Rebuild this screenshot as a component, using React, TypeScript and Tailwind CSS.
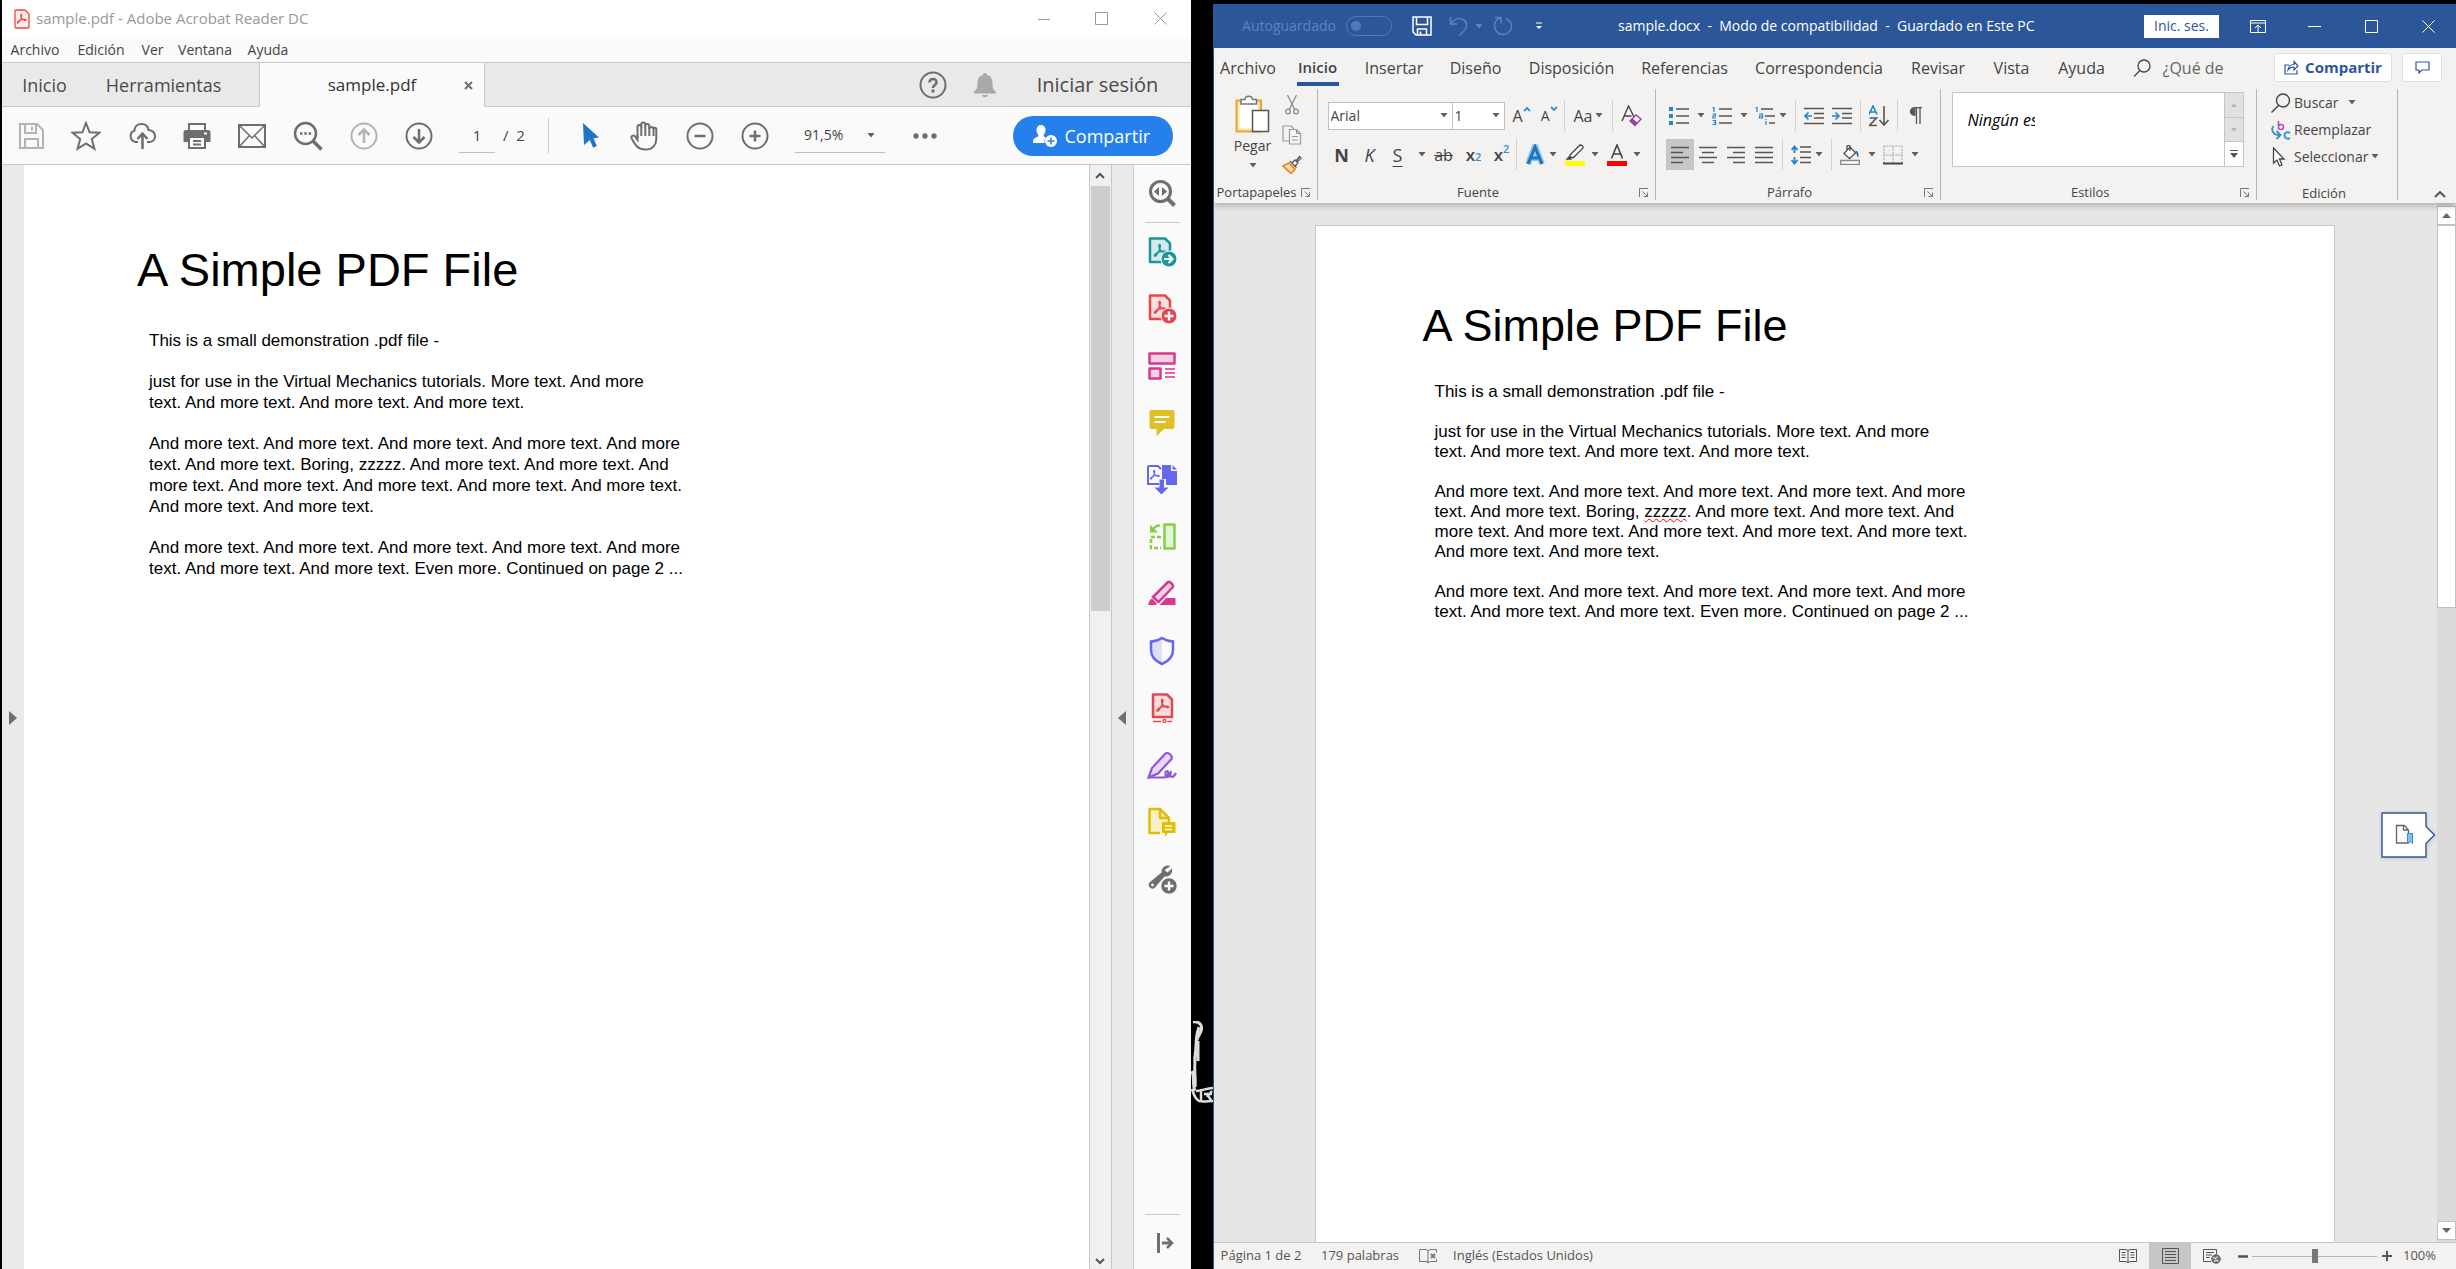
import React from "react";

type SvgProps = { w: number; h: number; sw?: number; className?: string; children: React.ReactNode };

function Svg({ w, h, sw = 1, className = "", children }: SvgProps) {
  return (
    <svg
      aria-hidden="true"
      width={w}
      height={h}
      viewBox={`0 0 ${w} ${h}`}
      fill="none"
      stroke="currentColor"
      strokeWidth={sw}
      className={`block shrink-0 ${className}`}
    >
      {children}
    </svg>
  );
}

function Btn({ label, className, children }: { label: string; className: string; children: React.ReactNode }) {
  return (
    <button type="button" aria-label={label} className={`flex shrink-0 items-center justify-center whitespace-nowrap ${className}`}>
      {children}
    </button>
  );
}

/* ---------- shared document body ---------- */

function Paragraphs({ className, marked }: { className: string; marked?: boolean }) {
  return (
    <div className={`flex flex-col gap-5 whitespace-nowrap ${className}`}>
      <p>This is a small demonstration .pdf file -</p>
      <p>
        just for use in the Virtual Mechanics tutorials. More text. And more
        <br />
        text. And more text. And more text. And more text.
      </p>
      <p>
        And more text. And more text. And more text. And more text. And more
        <br />
        text. And more text. Boring,{" "}
        <span className={marked ? "underline decoration-[#f00] decoration-wavy decoration-1 underline-offset-1 [text-decoration-skip-ink:none]" : ""}>zzzzz</span>
        . And more text. And more text. And
        <br />
        more text. And more text. And more text. And more text. And more text.
        <br />
        And more text. And more text.
      </p>
      <p>
        And more text. And more text. And more text. And more text. And more
        <br />
        text. And more text. And more text. Even more. Continued on page 2 ...
      </p>
    </div>
  );
}

/* ---------- Acrobat ---------- */

function AcrobatMark({ x, y, s = 1, color }: { x: number; y: number; s?: number; color: string }) {
  return (
    <g transform={`translate(${x} ${y}) scale(${s})`} stroke={color} strokeWidth="1.5">
      <path d="M5.5 0.5c1.4 0 .8 3.200-.2 5.500C4.300 8.300 2.200 12 1 12.200c-1.600 0 .6-3.200 4-4.100 3-1 7-1.400 7.200-.1.100 1.500-4.400-.2-5.800-2C5 4.200 4.600.6 5.500.5z" />
    </g>
  );
}

function AcrobatTitle() {
  return (
    <header className="flex h-[37px] shrink-0 items-center bg-white pl-3 text-[#999]">
      <Svg w={16} h={20} sw={1.3} className="text-[#f0463c]">
        <path d="M2 1h9l4 4v13a1 1 0 0 1-1 1H2a1 1 0 0 1-1-1V2a1 1 0 0 1 1-1z" fill="#fdeeee" />
        <AcrobatMark x={3} y={5} s={0.75} color="#f0463c" />
      </Svg>
      <h1 className="ml-1.5 flex-1 text-[15px] whitespace-nowrap">sample.pdf - Adobe Acrobat Reader DC</h1>
      <Btn label="Minimizar" className="h-full w-[58px]">
        <Svg w={12} h={12}><path d="M0 6.500h12" /></Svg>
      </Btn>
      <Btn label="Maximizar" className="h-full w-[58px]">
        <Svg w={13} h={13}><path d="M.5.5h12v12H.5z" /></Svg>
      </Btn>
      <Btn label="Cerrar" className="h-full w-[60px]">
        <Svg w={13} h={13}><path d="M.5.5l12 12M12.500.5l-12 12" /></Svg>
      </Btn>
    </header>
  );
}

function AcrobatMenu() {
  return (
    <nav className="flex h-[26px] shrink-0 items-center gap-4 border-b border-[#c8c8c8] bg-[#fafafa] pl-2 text-sm text-[#444]">
      <Btn label="Archivo" className="w-[50px]">Archivo</Btn>
      <Btn label="Edición" className="w-[50px]">Edición</Btn>
      <Btn label="Ver" className="w-[21px]">Ver</Btn>
      <Btn label="Ventana" className="w-[52px]">Ventana</Btn>
      <Btn label="Ayuda" className="w-[42px]">Ayuda</Btn>
    </nav>
  );
}

function AcrobatTabs() {
  return (
    <div className="flex h-11 shrink-0 items-stretch bg-[#e9e9e9] text-[#4b4b4b]">
      <div className="flex w-[257px] shrink-0 items-center border-b border-[#c8c8c8] pl-[19px] text-lg">
        <Btn label="Inicio" className="w-[47px]">Inicio</Btn>
        <Btn label="Herramientas" className="ml-[38px] w-[115px]">Herramientas</Btn>
      </div>
      <div className="flex w-[226px] shrink-0 items-center border-x border-[#c8c8c8] bg-[#fafafa] pl-[70px] text-[17px] text-[#333]">
        <Btn label="sample.pdf" className="w-[84px]">sample.pdf</Btn>
        <Btn label="Cerrar pestaña" className="ml-11 w-5 text-[#6e6e6e]">
          <Svg w={9} h={9} sw={2}><path d="M1 1l7 7M8 1l-7 7" /></Svg>
        </Btn>
      </div>
      <div className="flex flex-1 items-center justify-end border-b border-[#c8c8c8] pr-[30px]">
        <Btn label="Ayuda" className="text-[#6e6e6e]">
          <Svg w={28} h={28} sw={2}>
            <circle cx="14" cy="14" r="12.500" />
            <path d="M10.500 11.500c0-5 7.500-4.500 7 0-.3 2.500-3.500 2.500-3.500 5.500" strokeWidth="2.500" />
            <circle cx="14" cy="20" r="1.700" fill="currentColor" stroke="none" />
          </Svg>
        </Btn>
        <Btn label="Notificaciones" className="ml-[26px] text-[#a9a9a9]">
          <Svg w={24} h={26}>
            <path d="M12 1c1.500 0 2 .8 2 2 4 1 5.500 4 5.500 8 0 5 .8 6.500 3.500 9v1.500H1V20c2.700-2.500 3.500-4 3.500-9 0-4 1.500-7 5.500-8 0-1.200.5-2 2-2zM9 23h6c-.5 3-5.500 3-6 0z" fill="currentColor" stroke="none" />
          </Svg>
        </Btn>
        <Btn label="Iniciar sesión" className="ml-[38px] w-[126px] text-xl">Iniciar sesión</Btn>
      </div>
    </div>
  );
}

function CaretDown({ className = "" }: { className?: string }) {
  return (
    <Svg w={8} h={5} className={`text-[#605e5c] ${className}`}>
      <path d="M0.500 0h7L4 4.500z" fill="currentColor" stroke="none" />
    </Svg>
  );
}

function AcrobatToolbar() {
  return (
    <div className="flex h-[58px] shrink-0 items-center border-b border-[#c8c8c8] bg-[#fafafa] pl-4 text-[#6e6e6e]">
      <div className="flex items-center gap-[27px]">
        <Btn label="Guardar" className="w-[26px] text-[#b3b3b3]">
          <Svg w={28} h={28} sw={2}>
            <path d="M3 2h17l6 6v18H3zM8 2v9h11V2M15 4.500v4M8 26v-9h13v9" />
          </Svg>
        </Btn>
        <Btn label="Favoritos" className="w-[30px]">
          <Svg w={30} h={30} sw={2}>
            <path d="M15 2l3.600 9.300 9.900.5-7.700 6.300 2.600 9.700L15 22.400l-8.400 5.400 2.600-9.700-7.700-6.300 9.900-.5z" />
          </Svg>
        </Btn>
        <Btn label="Cargar en la nube" className="w-7">
          <Svg w={28} h={28} sw={2}>
            <path d="M10 20H7.500a6 6 0 0 1-1-11.500C6.500 5 9 2 13.500 2c4 0 6.500 2.500 7 6 4 .5 6.500 3 6.500 6.500 0 3-2.500 5.500-5.500 5.500H19" />
            <path d="M14.500 27V12M9.500 17l5-5.500 5 5.500" strokeWidth="2.500" />
          </Svg>
        </Btn>
        <Btn label="Imprimir" className="w-7">
          <Svg w={28} h={28} sw={2}>
            <path d="M6 8V2h16v6" />
            <path d="M3 8h22a2.500 2.500 0 0 1 2.500 2.500V20H23v-4H5v4H.5v-9.500A2.500 2.500 0 0 1 3 8z" fill="currentColor" stroke="none" />
            <path d="M6 15h16v11H6zM10 19h8M10 22.500h8" fill="#fafafa" />
            <path d="M21 11.500h3" stroke="#fafafa" />
          </Svg>
        </Btn>
        <Btn label="Correo" className="w-7">
          <Svg w={28} h={24} sw={2}>
            <path d="M1 1h26v22H1z" />
            <path d="M2 2l12 12L26 2M2 22l9-10M26 22l-9-10" strokeWidth="1.500" />
          </Svg>
        </Btn>
        <Btn label="Buscar" className="w-[30px]">
          <Svg w={30} h={30} sw={2.500}>
            <circle cx="12.500" cy="12.500" r="10.500" />
            <path d="M20 20l8.500 8.500" strokeWidth="3.500" />
            <path d="M7 12.500h2.500M11.300 12.500h2.500M15.600 12.500h2.500" />
          </Svg>
        </Btn>
        <Btn label="Página anterior" className="w-7 text-[#b3b3b3]">
          <Svg w={28} h={28} sw={2}>
            <circle cx="14" cy="14" r="12.500" />
            <path d="M14 21V8M8.500 13L14 7.500l5.500 5.500" strokeWidth="2.500" />
          </Svg>
        </Btn>
        <Btn label="Página siguiente" className="w-7">
          <Svg w={28} h={28} sw={2}>
            <circle cx="14" cy="14" r="12.500" />
            <path d="M14 7v13M8.500 15l5.500 5.500 5.500-5.500" strokeWidth="2.500" />
          </Svg>
        </Btn>
      </div>
      <input
        aria-label="Página"
        defaultValue="1"
        className="ml-[26px] h-[35px] w-9 border-b border-[#c0c0c0] bg-transparent text-center text-[15px] text-[#444] outline-none"
      />
      <span className="ml-2 w-7 text-[15px] text-[#444]">/&nbsp; 2</span>
      <div className="ml-[17px] h-[35px] w-px bg-[#c8c8c8]" />
      <Btn label="Seleccionar" className="ml-[34px] w-4 text-[#1d74c9]">
        <Svg w={16} h={26}>
          <path d="M0 0l16 14.500-5.500.8 3.300 7.700-3.600 1.800-3.400-7.800L1 22z" fill="currentColor" stroke="none" />
        </Svg>
      </Btn>
      <Btn label="Mano" className="ml-[31px] w-7">
        <Svg w={28} h={30} sw={2}>
          <path d="M7.500 17V6c0-2.600 3.800-2.600 3.800 0V3.500c0-2.800 4-2.800 4 0V5c0-2.700 4-2.700 4 0v3c0-2.600 4.200-2.600 4.200 0" />
          <path d="M7.500 13.500v5.500L5 15.500c-1.500-2-4.500-.3-3.300 2C5 24 8 28.500 15.500 28.500c7.500 0 10.800-5 10.800-10.500V8.500c0-2.200-2.800-2.200-2.800 0V15M11.300 5.500V15M15.300 4.500V15M19.300 6v9" />
        </Svg>
      </Btn>
      <Btn label="Reducir" className="ml-7 w-7">
        <Svg w={28} h={28} sw={2}><circle cx="14" cy="14" r="12.500" /><path d="M8.500 14h11" strokeWidth="2.500" /></Svg>
      </Btn>
      <Btn label="Ampliar" className="ml-[27px] w-7">
        <Svg w={28} h={28} sw={2}><circle cx="14" cy="14" r="12.500" /><path d="M8.500 14h11M14 8.500v11" strokeWidth="2.500" /></Svg>
      </Btn>
      <div className="ml-[26px] flex h-[35px] w-[90px] shrink-0 items-center border-b border-[#c0c0c0]">
        <select aria-label="Zoom" className="w-[72px] appearance-none bg-transparent pl-[9px] text-sm text-[#444] outline-none">
          <option>91,5%</option>
        </select>
        <CaretDown />
      </div>
      <Btn label="Más herramientas" className="ml-7 w-6">
        <Svg w={24} h={6}>
          <g fill="currentColor" stroke="none"><circle cx="3" cy="3" r="2.700" /><circle cx="12" cy="3" r="2.700" /><circle cx="21" cy="3" r="2.700" /></g>
        </Svg>
      </Btn>
      <div className="flex flex-1 justify-end pr-[18px]">
        <button type="button" className="flex h-10 w-40 items-center rounded-full bg-[#2680eb] pl-5 text-lg font-medium whitespace-nowrap text-white">
          <Svg w={24} h={24} className="mr-2">
            <path d="M8 1c3 0 4.500 2 4.500 5 0 2-.8 3.800-1.800 4.800v1.700L13 13.500a7 7 0 0 0-1.500 5.500H0c0-3.500.5-4.800 5.300-6.500v-1.700C4.300 9.800 3.500 8 3.500 6c0-3 1.500-5 4.500-5z" fill="#fff" stroke="none" />
            <circle cx="18" cy="17" r="6" fill="#fff" stroke="none" />
            <path d="M14.500 17h7M18 13.500v7" stroke="#2680eb" strokeWidth="1.500" />
          </Svg>
          Compartir
        </button>
      </div>
    </div>
  );
}

const docPath = "M3 1.500h15l5 5V25H3z";

const acrobatTools: { label: string; icon: React.ReactNode }[] = [
  {
    label: "Exportar PDF",
    icon: (
      <Svg w={30} h={30} sw={2.500} className="text-[#1d969b]">
        <path d={docPath} fill="#d3e9ea" strokeLinejoin="round" />
        <AcrobatMark x={7} y={7} color="#1d969b" />
        <circle cx="22" cy="22" r="8" fill="#1d969b" stroke="#fafafa" strokeWidth="1" />
        <path d="M17 22h8M21.500 18l4 4-4 4" stroke="#fff" strokeWidth="2.200" />
      </Svg>
    ),
  },
  {
    label: "Crear PDF",
    icon: (
      <Svg w={30} h={30} sw={2.500} className="text-[#e34850]">
        <path d={docPath} fill="#f9dddf" strokeLinejoin="round" />
        <AcrobatMark x={7} y={7} color="#e34850" />
        <circle cx="22" cy="22" r="8" fill="#e34850" stroke="#fafafa" strokeWidth="1" />
        <path d="M17.500 22h9M22 17.500v9" stroke="#fff" strokeWidth="2.400" />
      </Svg>
    ),
  },
  {
    label: "Organizar páginas",
    icon: (
      <Svg w={30} h={30} sw={2.500} className="text-[#d83790]">
        <path d="M2.500 2.500h25v10h-25zM2.500 17.500h11v10h-11z" fill="#f4d2e6" strokeLinejoin="round" />
        <path d="M18 18h10M18 22h10M18 26h10" strokeWidth="1.300" />
      </Svg>
    ),
  },
  {
    label: "Comentar",
    icon: (
      <Svg w={30} h={30} className="text-[#dfbf28]">
        <path d="M4.500 2h21A2 2 0 0 1 27.500 4v15a2 2 0 0 1-2 2H17l-7.500 7V21h-5a2 2 0 0 1-2-2V4a2 2 0 0 1 2-2z" fill="currentColor" stroke="none" />
        <path d="M7.500 9h15M7.500 14h11" stroke="#fff" strokeWidth="2" />
      </Svg>
    ),
  },
  {
    label: "Combinar archivos",
    icon: (
      <Svg w={30} h={30} sw={2} className="text-[#6767ec]">
        <path d="M12 19H1V2a1 1 0 0 1 1-1h9l3 3" />
        <AcrobatMark x={3} y={5} s={0.75} color="#6767ec" />
        <path d="M15 0h9v6h6v14H19v-6h-4z" fill="currentColor" stroke="none" />
        <path d="M25.500 0L30 4.500h-4.500z" fill="currentColor" stroke="none" />
        <path d="M12.500 14.500h4.500v8h4.500l-7 7-7-7h5z" fill="currentColor" stroke="none" />
      </Svg>
    ),
  },
  {
    label: "Comparar",
    icon: (
      <Svg w={30} h={30} sw={2.500} className="text-[#85d044]">
        <path d="M17.500 2.500h10v24h-10z" fill="#e3f3d6" strokeLinejoin="round" />
        <path d="M14 15H4v11h10" strokeDasharray="4 2" />
        <path d="M13 3.500c-4 0-5.500 1.500-6.500 4" />
        <path d="M3 2.500v8h8z" fill="currentColor" stroke="none" />
      </Svg>
    ),
  },
  {
    label: "Censurar",
    icon: (
      <Svg w={30} h={30} sw={2.500} className="text-[#d83790]">
        <path d="M20.500 3.500c2-2 7 2.500 5 5L11.500 23l-5.500-5z" fill="#f4d2e6" />
        <path d="M1 26c1-3.500 2-5.500 4-6.500l5 5c-1 1-1.500 1.500-2 1.500zM19 19h8.500a1 1 0 0 1 1 1v6h-16z" fill="currentColor" stroke="none" />
      </Svg>
    ),
  },
  {
    label: "Proteger",
    icon: (
      <Svg w={30} h={30} sw={2.500} className="text-[#6767ec]">
        <path d="M15 2v26C8 25 4 21 4 14V5.500C9 5.500 12 4 15 2z" fill="#dedef9" stroke="none" />
        <path d="M15 2c3 2 6.500 3.500 11 3.500V14c0 7-4 11-11 14C8 25 4 21 4 14V5.500C8.500 5.500 12 4 15 2z" />
      </Svg>
    ),
  },
  {
    label: "Optimizar PDF",
    icon: (
      <Svg w={30} h={30} sw={2.500} className="text-[#e34850]">
        <path d="M6 1.500h14l5 5V24H6z" fill="#f9dddf" strokeLinejoin="round" />
        <AcrobatMark x={9.500} y={6} color="#e34850" />
        <path d="M6 28.500h8M20.500 28.500H25" strokeWidth="1.300" />
        <circle cx="17.500" cy="28" r="1.500" strokeWidth="1.300" />
      </Svg>
    ),
  },
  {
    label: "Rellenar y firmar",
    icon: (
      <Svg w={30} h={30} sw={2.200} className="text-[#9256d9]">
        <path d="M18 4c2-3 8.500 1.500 6.500 5L11 23.500 1.500 27.500 5 18z" fill="#e6d9f6" />
        <path d="M1 27.500h16c5-1 5-6 3-6.500-2.500 0-2 6 .5 6 3 0 3-5 3.500-6-.8 2-1 6 1 6 1.800 0 2.500-1.500 4-4" />
      </Svg>
    ),
  },
  {
    label: "Enviar para comentarios",
    icon: (
      <Svg w={30} h={30} sw={2.500} className="text-[#dfbf00]">
        <path d="M13 26H2.500V2H13l9 9v4" fill="#f6efc8" strokeLinejoin="round" />
        <path d="M13 2v9h9" />
        <path d="M15 15h13.500v11H21l-3 4v-4h-3z" fill="currentColor" stroke="none" />
        <path d="M18 19h7M18 22.500h7" stroke="#fff" strokeWidth="1.500" />
      </Svg>
    ),
  },
  {
    label: "Más herramientas",
    icon: (
      <Svg w={30} h={30} className="text-[#6e6e6e]">
        <path d="M23.500 2c-4-2-9.500 1-9 6.500L2.500 18.500c-2.500 3 1.500 8 5 5.500l10-11.500c5 .5 8.500-3 7.500-8L20.500 8.500 17.500 6z" fill="currentColor" stroke="none" />
        <circle cx="5.500" cy="21" r="1.400" fill="#fafafa" stroke="none" />
        <circle cx="22" cy="22" r="8.200" fill="currentColor" stroke="#fafafa" />
        <path d="M17.500 22h9M22 17.500v9" stroke="#fff" strokeWidth="2.400" />
      </Svg>
    ),
  },
];

function AcrobatBody() {
  return (
    <div className="flex min-h-0 flex-1">
      <Btn label="Mostrar panel izquierdo" className="w-[22px] bg-[#e9e9e9] pt-px text-[#6e6e6e]">
        <Svg w={8} h={14}><path d="M0 0l8 7-8 7z" fill="currentColor" stroke="none" /></Svg>
      </Btn>
      <article className="min-w-0 flex-1 overflow-hidden border-r border-[#c8c8c8] bg-white pt-[77px] pl-[113px] font-[Liberation_Sans,Arial,sans-serif] text-black">
        <h2 className="text-[47px] leading-[56px] whitespace-nowrap">A Simple PDF File</h2>
        <Paragraphs className="mt-8 ml-3 text-[17px] leading-[21px]" />
      </article>
      <div className="flex w-[22px] shrink-0 flex-col items-center border-r border-[#c8c8c8] bg-[#f0f0f0] text-[#555]">
        <Btn label="Subir" className="h-[21px] w-full">
          <Svg w={10} h={7} sw={2}><path d="M1 6l4-4 4 4" /></Svg>
        </Btn>
        <div className="h-[38.5%] w-[19px] bg-[#cdcdcd]" />
        <div className="flex-1" />
        <Btn label="Bajar" className="h-[15px] w-full">
          <Svg w={10} h={7} sw={2}><path d="M1 1l4 4 4-4" /></Svg>
        </Btn>
      </div>
      <Btn label="Ocultar panel derecho" className="w-[22px] border-r border-[#c8c8c8] bg-[#e9e9e9] pt-0.5 text-[#6e6e6e]">
        <Svg w={8} h={14}><path d="M8 0L0 7l8 7z" fill="currentColor" stroke="none" /></Svg>
      </Btn>
      <aside className="flex w-[57px] shrink-0 flex-col items-center bg-[#fafafa] text-[#6e6e6e]">
        <Btn label="Buscar herramientas" className="h-[57px] w-full pb-0.5">
          <Svg w={28} h={28} sw={3}>
            <circle cx="12.500" cy="12.500" r="10" />
            <path d="M19.500 19.500l7 7" strokeWidth="4" />
            <path d="M11 8v9l-5-4.500zM14 8v9l5-4.500z" fill="currentColor" stroke="none" />
          </Svg>
        </Btn>
        <div className="h-px w-[35px] bg-[#c8c8c8]" />
        <div className="flex flex-col">
          {acrobatTools.map((t) => (
            <Btn key={t.label} label={t.label} className="h-[57px] w-[57px]">{t.icon}</Btn>
          ))}
        </div>
        <div className="flex-1" />
        <div className="h-px w-[35px] bg-[#c8c8c8]" />
        <Btn label="Contraer" className="mb-0.5 h-[52px] w-full pt-1 pl-2">
          <Svg w={18} h={20} sw={3}><path d="M1.500 0v20M5 10h9" /><path d="M10 5l5 5-5 5" strokeWidth="2.500" /></Svg>
        </Btn>
      </aside>
    </div>
  );
}

/* ---------- Word ---------- */

function WordTitle() {
  return (
    <header className="flex h-11 shrink-0 items-center bg-[#2b579a] pl-[27px] text-white">
      <label className="flex items-center text-sm text-[#5c82bd]">
        <span className="flex w-[97px] justify-center">Autoguardado</span>
        <span className="relative ml-2 flex h-5 w-[46px] items-center rounded-full border border-[#5079b5] pl-1">
          <input type="checkbox" disabled className="absolute inset-0 appearance-none" />
          <span className="h-2.5 w-2.5 rounded-full bg-[#5079b5]" />
        </span>
      </label>
      <Btn label="Guardar" className="ml-5">
        <Svg w={20} h={20} sw={1.500}><path d="M1 1h18v18H4l-3-3zM4.500 1v7.500h11V1M5.500 19v-6h9v6M8.500 15.500V19" /></Svg>
      </Btn>
      <Btn label="Deshacer" className="ml-[17px] text-[#5c82bd]">
        <Svg w={20} h={20} sw={1.500}><path d="M1.500 1v7h7M1.500 8C5 3 10 1.500 14 3.500c5 3 4.500 8 1 11.500l-5 4.500" /></Svg>
      </Btn>
      <CaretDown className="ml-1.5 text-[#5c82bd]!" />
      <Btn label="Rehacer" className="ml-2.5 text-[#5c82bd]">
        <Svg w={20} h={20} sw={1.500}><path d="M2 1.500h6v6M8 1.500C3 3.500 1 7 1.500 11c1 5 5 8 9.500 7.500s8-4.500 7.500-9C18 6 16 4 13 2.500" /></Svg>
      </Btn>
      <Btn label="Personalizar" className="ml-[22px]">
        <Svg w={8} h={8}><path d="M1 1h6" /><path d="M1 4h6L4 7z" fill="currentColor" stroke="none" /></Svg>
      </Btn>
      <div className="flex flex-1 justify-center pr-[34px]">
        <h1 className="text-sm whitespace-pre">sample.docx  -  Modo de compatibilidad  -  Guardado en Este PC</h1>
      </div>
      <Btn label="Inic. ses." className="h-[23px] w-[75px] bg-white text-sm text-[#2b579a]">Inic. ses.</Btn>
      <Btn label="Opciones de la cinta" className="ml-2.5 h-full w-[57px]">
        <Svg w={16} h={13}><path d="M.5.5h15v12H.5zM.5 3h15M8 12V5.500M5 8l3-3 3 3" /></Svg>
      </Btn>
      <Btn label="Minimizar" className="h-full w-[57px]">
        <Svg w={13} h={13}><path d="M0 6.500h13" /></Svg>
      </Btn>
      <Btn label="Maximizar" className="h-full w-[57px]">
        <Svg w={13} h={13}><path d="M.5.5h12v12H.5z" /></Svg>
      </Btn>
      <Btn label="Cerrar" className="h-full w-[56px]">
        <Svg w={13} h={13}><path d="M.5.5l12 12M12.500.5l-12 12" /></Svg>
      </Btn>
    </header>
  );
}

function WordTabs() {
  return (
    <nav className="flex h-[39px] shrink-0 items-center gap-[27px] pr-3.5 pl-1.5 text-base text-[#444]">
      <div className="flex items-center gap-5">
        <Btn label="Archivo" className="w-[57px]">Archivo</Btn>
        <div className="flex h-9 flex-col items-center justify-end">
          <Btn label="Inicio" className="h-7 w-[42px] text-[15px] font-semibold">Inicio</Btn>
          <div className="h-1 w-[42px] bg-[#2b579a]" />
        </div>
      </div>
      <Btn label="Insertar" className="w-[57px]">Insertar</Btn>
      <Btn label="Diseño" className="w-[52px]">Diseño</Btn>
      <Btn label="Disposición" className="w-[86px]">Disposición</Btn>
      <Btn label="Referencias" className="w-[86px]">Referencias</Btn>
      <Btn label="Correspondencia" className="w-[129px]">Correspondencia</Btn>
      <Btn label="Revisar" className="w-[55px]">Revisar</Btn>
      <Btn label="Vista" className="w-[38px]">Vista</Btn>
      <Btn label="Ayuda" className="w-[48px]">Ayuda</Btn>
      <label className="flex items-center gap-3">
        <Svg w={18} h={18} sw={1.300}><circle cx="11" cy="7" r="6" /><path d="M7 11.500l-6 6" /></Svg>
        <input aria-label="¿Qué desea hacer?" placeholder="¿Qué de" className="w-[61px] bg-transparent text-base outline-none placeholder:text-[#666]" />
      </label>
      <div className="flex flex-1 justify-end gap-2.5">
        <button type="button" className="flex h-[29px] w-[118px] items-center justify-center gap-1.5 rounded-[3px] border border-[#e1dfdd] bg-white text-[15px] font-bold text-[#2b579a]">
          <Svg w={15} h={15} sw={1.200}><path d="M5 5H1v9h12v-4M4 10c.5-4 3-5.500 6-5.500V1.500L14 6l-4 4V7c-3 0-4.500 1-6 3z" /></Svg>
          Compartir
        </button>
        <Btn label="Comentarios" className="h-[29px] w-10 rounded-[3px] border border-[#e1dfdd] bg-white text-[#2b579a]">
          <Svg w={15} h={13} sw={1.200}><path d="M1 1h13v8H7l-3 3V9H1z" /></Svg>
        </Btn>
      </div>
    </nav>
  );
}

function GroupLabel({ text, launcher = true }: { text: string; launcher?: boolean }) {
  return (
    <div className="flex h-3.5 items-center pr-1.5 text-[13px] text-[#444]">
      <span className="flex flex-1 justify-center whitespace-nowrap">{text}</span>
      {launcher && (
        <Btn label={`Opciones de ${text}`} className="h-3.5 w-2.5 text-[#777]">
          <Svg w={10} h={10}><path d="M.5 9V.5H9M3.500 3.500l5 5M8.500 4.500v4h-4" /></Svg>
        </Btn>
      )}
    </div>
  );
}

function Sep({ className = "" }: { className?: string }) {
  return <div className={`h-[31px] w-px shrink-0 bg-[#d2d0ce] ${className}`} />;
}

function Clipboard() {
  return (
    <section className="flex w-[104px] shrink-0 flex-col border-r border-[#b5b5b5]">
      <div className="flex min-h-0 flex-1 items-start pl-5">
        <button type="button" className="flex w-[38px] flex-col items-center pt-1.5 text-sm text-[#444]">
          <Svg w={35} h={38} sw={1.500}>
            <path d="M1.500 5.500h24.500v31H1.500z" fill="#fbe3a8" stroke="#e8a33d" strokeWidth="2" />
            <path d="M4.500 8.500h18.500v25H4.500z" fill="#fff" stroke="none" />
            <path d="M6 9V4.500h4C10.500 0 17 0 17.500 4.500h4V9z" fill="#fff" stroke="#777" />
            <path d="M17.500 15.500h16v21h-16z" fill="#fff" stroke="#555" />
          </Svg>
          <span className="leading-[26px]">Pegar</span>
          <CaretDown className="mt-1" />
        </button>
        <div className="ml-2.5 flex flex-col items-center gap-2.5 pt-1.5">
          <Btn label="Cortar" className="w-5">
            <Svg w={14} h={20} sw={1.300} className="text-[#8a8a8a]"><path d="M2.500 0l7 14M11.500 0l-7 14" /><circle cx="3" cy="16.500" r="2.300" /><circle cx="11" cy="16.500" r="2.300" /></Svg>
          </Btn>
          <Btn label="Copiar" className="w-5">
            <Svg w={20} h={20} sw={1.200} className="text-[#999]"><path d="M7 16H1V1h8l3 3" /><path d="M7.500 4.500h7l4 4V19h-11zM14.500 4.500v4h4M10 11.500h6M10 15h6" fill="#f6f6f6" /></Svg>
          </Btn>
          <Btn label="Copiar formato" className="w-5">
            <Svg w={20} h={19} sw={1.300}><path d="M1 11l6-3 6 6-4 4.500z" fill="#fbe3a8" stroke="#ed8733" strokeWidth="1.800" /><path d="M8 6l6.500 6.500M10 8l3-3 3 3-3 3M14 6l3.500-4.500L19 3l-4 4z" stroke="#555" fill="#fff" /></Svg>
          </Btn>
        </div>
      </div>
      <div className="flex h-3.5 items-center justify-between pr-1.5 pl-1 text-[13px] whitespace-nowrap text-[#444]">
        <span className="flex w-[78px] justify-center">Portapapeles</span>
        <Btn label="Opciones del portapapeles" className="h-3.5 w-2.5 text-[#777]">
          <Svg w={10} h={10}><path d="M.5 9V.5H9M3.500 3.500l5 5M8.500 4.500v4h-4" /></Svg>
        </Btn>
      </div>
    </section>
  );
}

function FontGroup() {
  return (
    <section className="flex w-[338px] shrink-0 flex-col border-r border-[#b5b5b5] text-[#444]">
      <div className="flex flex-1 flex-col gap-2 pt-[11px] pl-2.5">
        <div className="flex h-[31px] items-center">
          <div className="flex h-[28px] w-[125px] items-center border border-[#c3c1bf] bg-white pr-1">
            <select aria-label="Fuente" className="flex-1 appearance-none bg-transparent pl-0.5 text-sm outline-none"><option>Arial</option></select>
            <CaretDown />
          </div>
          <div className="-ml-px flex h-[28px] w-[53px] items-center border border-[#c3c1bf] bg-white pr-1">
            <select aria-label="Tamaño" className="min-w-0 flex-1 appearance-none bg-transparent pl-0.5 text-sm outline-none"><option>1</option></select>
            <CaretDown />
          </div>
          <Btn label="Aumentar fuente" className="ml-2 items-start! text-base leading-5">A<Svg w={8} h={6} sw={1.800} className="text-[#2f8fd0]"><path d="M1 5l3-3 3 3" /></Svg></Btn>
          <Btn label="Reducir fuente" className="ml-2.5 items-start! text-sm leading-5">A<Svg w={8} h={6} sw={1.800} className="text-[#2f8fd0]"><path d="M1 1l3 3 3-3" /></Svg></Btn>
          <Sep className="ml-1.5" />
          <Btn label="Cambiar mayúsculas" className="ml-2 w-[31px] gap-0.5 text-base">Aa<CaretDown /></Btn>
          <Sep className="ml-2" />
          <Btn label="Borrar formato" className="ml-2">
            <Svg w={22} h={22} sw={1.400}><path d="M1 16L7.500 1 13 12M3.500 11h7" /><path d="M9 16l6-6 5 4-6 6.500z" stroke="#9b3fa8" fill="#fff" /><path d="M9 16l2.500-2.500 5 4-2.500 3z" fill="#9b3fa8" stroke="none" /></Svg>
          </Btn>
        </div>
        <div className="flex h-[31px] items-center">
          <Btn label="Negrita" className="w-7 text-lg font-bold">N</Btn>
          <Btn label="Cursiva" className="w-7 text-lg italic">K</Btn>
          <Btn label="Subrayado" className="w-7 text-lg underline underline-offset-4">S</Btn>
          <CaretDown className="ml-1.5" />
          <Btn label="Tachado" className="ml-2 w-5 text-base line-through">ab</Btn>
          <Btn label="Subíndice" className="ml-3 w-4 text-[17px] font-semibold">x<sub className="text-[11px] text-[#2f8fd0]">2</sub></Btn>
          <Btn label="Superíndice" className="ml-3 w-4 text-[17px] font-semibold">x<sup className="text-[11px] text-[#2f8fd0]">2</sup></Btn>
          <Sep className="ml-1.5" />
          <Btn label="Efectos de texto" className="ml-2 w-5">
            <Svg w={20} h={22} sw={1.500} className="text-[#1e75bb]"><path d="M3 20L10 2l7 18M5.500 14h9" stroke="#8ec6ee" strokeWidth="6" /><path d="M3 20L10 3l7 17M5.500 14h9" strokeWidth="3" /></Svg>
          </Btn>
          <CaretDown className="ml-1" />
          <Btn label="Resaltado" className="ml-2 w-5">
            <Svg w={20} h={22} sw={1.300}><path d="M0 17h20v5H0z" fill="#ff0" stroke="none" /><path d="M5 11l10-10c2 0 3.500 1.500 3 3L8.500 13.500H5zM5 12l-3 3h4.500" fill="#fff" /></Svg>
          </Btn>
          <CaretDown className="ml-1.5" />
          <Btn label="Color de fuente" className="ml-2 w-5">
            <Svg w={20} h={22} sw={1.600}><path d="M0 17h20v5H0z" fill="#f00" stroke="none" /><path d="M4.500 14.500L10 1l5.500 13.500M6.500 10h7" /></Svg>
          </Btn>
          <CaretDown className="ml-1.5" />
        </div>
      </div>
      <GroupLabel text="Fuente" />
    </section>
  );
}

function AlignIcon({ d }: { d: string }) {
  return <Svg w={18} h={18} sw={1.600} className="text-[#555]"><path d={d} /></Svg>;
}

function ParagraphGroup() {
  return (
    <section className="flex w-[285px] shrink-0 flex-col border-r border-[#b5b5b5] text-[#555]">
      <div className="flex flex-1 flex-col gap-2 pt-[11px] pl-2.5">
        <div className="flex h-[31px] items-center">
          <Btn label="Viñetas" className="ml-[3px] w-5">
            <Svg w={20} h={20} sw={1.600}><path d="M7 3h13M7 10h13M7 17h13" /><path d="M0 1h4v4H0zM0 8h4v4H0zM0 15h4v4H0z" fill="#1e84cc" stroke="none" /></Svg>
          </Btn>
          <CaretDown className="ml-2" />
          <Btn label="Numeración" className="ml-[7px] w-5">
            <Svg w={20} h={20} sw={1.600}><path d="M7 3h13M7 10h13M7 17h13" /><path d="M.5 1.500h1.500V6M.5 8h3v2H1v2h3M.5 14.500h3v4h-3M1.500 16.500h2" stroke="#1e84cc" strokeWidth="1.200" /></Svg>
          </Btn>
          <CaretDown className="ml-2" />
          <Btn label="Lista multinivel" className="ml-[7px] w-5">
            <Svg w={20} h={20} sw={1.600}><path d="M6 3h12M10 10h10M14 17h6" /><path d="M.5 1.500h1.500V6M4 8h3.500v4H4.500v-2h3M11 13v1M11 15v4" stroke="#1e84cc" strokeWidth="1.200" /></Svg>
          </Btn>
          <CaretDown className="ml-1" />
          <Sep className="ml-2" />
          <Btn label="Reducir sangría" className="ml-2 w-5">
            <Svg w={20} h={18} sw={1.600}><path d="M0 1.500h20M10 6.500h10M10 11h10M0 16.500h20" /><path d="M8 9H1M4.500 5.500L1 9l3.500 3.500" stroke="#1e84cc" /></Svg>
          </Btn>
          <Btn label="Aumentar sangría" className="ml-2 w-5">
            <Svg w={20} h={18} sw={1.600}><path d="M0 1.500h20M10 6.500h10M10 11h10M0 16.500h20" /><path d="M0 9h7M3.500 5.500L7 9l-3.500 3.500" stroke="#1e84cc" /></Svg>
          </Btn>
          <Sep className="ml-2" />
          <Btn label="Ordenar" className="ml-2 w-5">
            <Svg w={20} h={22} sw={1.600}><path d="M0 9.500L4 1l4 8.500M1.500 7h5" stroke="#1e84cc" /><path d="M.5 13h7l-7 7.500h7.500M15 1v18M10.500 15l4.500 5 4.500-5" /></Svg>
          </Btn>
          <Sep className="ml-2" />
          <Btn label="Mostrar todo" className="ml-2.5 w-4">
            <Svg w={13} h={17} sw={1.300}><path d="M6 .5h7M7.500.5V17M11 .5V17" /><path d="M6.500 0C-1 0-1 9 6.500 9z" fill="currentColor" stroke="none" /></Svg>
          </Btn>
        </div>
        <div className="flex h-[31px] items-center">
          <Btn label="Alinear a la izquierda" className="h-[31px] w-7 bg-[#c8c6c4]"><AlignIcon d="M0 1.500h18M0 6.500h12M0 11.500h18M0 16.500h12" /></Btn>
          <Btn label="Centrar" className="w-[28px]"><AlignIcon d="M0 1.500h18M3 6.500h12M0 11.500h18M3 16.500h12" /></Btn>
          <Btn label="Alinear a la derecha" className="w-[28px]"><AlignIcon d="M0 1.500h18M6 6.500h12M0 11.500h18M6 16.500h12" /></Btn>
          <Btn label="Justificar" className="w-[28px]"><AlignIcon d="M0 1.500h18M0 6.500h18M0 11.500h18M0 16.500h18" /></Btn>
          <Sep className="ml-1" />
          <Btn label="Espaciado" className="ml-2">
            <Svg w={20} h={20} sw={1.600}><path d="M9 2h11M9 7h11M9 12.500h11M9 17.500h11" /><path d="M3.500 2v6M.5 5l3-3.500 3 3.500M3.500 12v6M.5 15l3 3.500 3-3.500" stroke="#1e84cc" strokeWidth="1.800" /></Svg>
          </Btn>
          <CaretDown className="ml-1" />
          <Sep className="ml-2" />
          <Btn label="Sombreado" className="ml-2">
            <Svg w={20} h={20} sw={1.300}><path d="M.7 15.500h18.600v4H.7z" fill="#fff" stroke="#888" /><path d="M4 8.500L10 2l5.500 6-6 5.500zM7 6V1.500c0-1.500 3-1.500 3 0V6" fill="#fff" /><path d="M15 5.500c3 0 4 3 3.500 7-2-1-1.500-4-3.500-7z" fill="#1e75bb" stroke="none" /></Svg>
          </Btn>
          <CaretDown className="ml-2" />
          <Btn label="Bordes" className="ml-[7px]">
            <Svg w={20} h={20}><path d="M.5 1h19M.5 10h19M1 1v17M10 1v17M19 1v17" stroke="#a8a8a8" strokeDasharray="2 1" /><path d="M0 18.500h20" stroke="#444" strokeWidth="2" /></Svg>
          </Btn>
          <CaretDown className="ml-2" />
        </div>
      </div>
      <GroupLabel text="Párrafo" />
    </section>
  );
}

function StylesGroup() {
  return (
    <section className="flex min-w-0 flex-1 flex-col border-r border-[#b5b5b5]">
      <div className="flex-1 pt-[3px] pr-3 pl-[11px]">
        <div className="flex h-[75px] border border-[#c8c6c4] bg-white">
          <div className="flex min-w-0 flex-1 items-center pb-5 pl-[15px]">
            <button type="button" className="w-[67px] overflow-hidden text-left text-base whitespace-nowrap text-black italic">Ningún es</button>
          </div>
          <div className="flex w-[19px] shrink-0 flex-col border-l border-[#c8c6c4]">
            <Btn label="Fila anterior" className="flex-1 bg-[#e1e1e1]"><Svg w={6} h={4}><path d="M0 4h6L3 0z" fill="#b5b5b5" stroke="none" /></Svg></Btn>
            <Btn label="Fila siguiente" className="flex-1 border-y border-[#c8c6c4] bg-[#e1e1e1]"><Svg w={6} h={4}><path d="M0 0h6L3 4z" fill="#b5b5b5" stroke="none" /></Svg></Btn>
            <Btn label="Más estilos" className="flex-1"><Svg w={8} h={8} className="text-[#555]"><path d="M0 .5h8" /><path d="M0 3h8L4 8z" fill="currentColor" stroke="none" /></Svg></Btn>
          </div>
        </div>
      </div>
      <GroupLabel text="Estilos" />
    </section>
  );
}

function EditGroup() {
  return (
    <section className="flex w-[141px] shrink-0 flex-col border-r border-[#b5b5b5] text-sm text-[#444]">
      <div className="flex flex-1 flex-col pl-3.5">
        <button type="button" className="flex h-[27px] items-center gap-[3px]">
          <Svg w={20} h={20} sw={1.400}><circle cx="12" cy="7.500" r="6.500" /><path d="M7.500 12.500L.5 19.500" /></Svg>
          Buscar<CaretDown className="ml-1.5" />
        </button>
        <button type="button" className="flex h-[27px] items-center gap-[3px]">
          <Svg w={20} h={20} sw={1.500}><path d="M7.500 1v8.500M7.500 6c1-2.500 5-2 5 1s-4 3.500-5 1" stroke="#b146c2" /><path d="M19 13c-3.500-2-6 .5-5.500 3s3.500 3.500 5.500 2M2.500 6c-2.500 3-1.500 9 6 9M5.500 11l4 4-4 4" stroke="#2f8fd0" strokeWidth="1.800" /></Svg>
          Reemplazar
        </button>
        <button type="button" className="flex h-[27px] items-center gap-[3px]">
          <Svg w={20} h={20} sw={1.300}><path d="M2.500 1v15l3.500-3 2.500 6 2.500-1-2.500-6H13z" fill="#fff" /></Svg>
          Seleccionar<CaretDown />
        </button>
      </div>
      <GroupLabel text="Edición" launcher={false} />
    </section>
  );
}

function Ribbon() {
  return (
    <div className="relative z-10 shrink-0 bg-[#f3f2f1] shadow-[0_3px_6px_rgba(0,0,0,0.22)]">
      <WordTabs />
      <div className="flex h-[116px] pt-0.5 pb-[3px]">
        <Clipboard />
        <FontGroup />
        <ParagraphGroup />
        <StylesGroup />
        <EditGroup />
        <div className="flex w-[58px] shrink-0 items-end justify-end pr-2">
          <Btn label="Contraer la cinta" className="h-3 w-4 text-[#555]"><Svg w={12} h={7} sw={2}><path d="M1 6l5-5 5 5" /></Svg></Btn>
        </div>
      </div>
    </div>
  );
}

function WordBody() {
  return (
    <div className="relative flex min-h-0 flex-1 bg-[#e6e6e6]">
      <article className="mr-[102px] ml-[101px] mt-[22px] min-w-0 flex-1 overflow-hidden border-x border-t border-[#c6c6c6] bg-white pt-[74px] pl-[107px] font-[Liberation_Sans,Arial,sans-serif] text-black">
        <h2 className="text-[45px] leading-[52px] whitespace-nowrap">A Simple PDF File</h2>
        <Paragraphs marked className="mt-[30px] ml-3 text-[17px] leading-5" />
      </article>
      <div className="flex w-[19px] shrink-0 flex-col bg-[#dadada] pt-[3px] pb-[2px] text-[#666]">
        <Btn label="Subir" className="h-[19px] border border-[#c0c0c0] bg-white"><Svg w={9} h={5}><path d="M0 5h9L4.500 0z" fill="currentColor" stroke="none" /></Svg></Btn>
        <div className="h-[37%] border border-[#c0c0c0] bg-white" />
        <div className="flex-1" />
        <Btn label="Bajar" className="h-[19px] border border-[#c0c0c0] bg-white"><Svg w={9} h={5}><path d="M0 0h9L4.500 5z" fill="currentColor" stroke="none" /></Svg></Btn>
      </div>
      <button type="button" aria-label="Marcador de lectura" className="absolute top-[609px] right-5 drop-shadow-sm">
        <Svg w={55} h={46}>
          <path d="M1 1h44v13.500l8.500 8.500-8.500 8.500V45H1z" fill="#fff" stroke="#2b579a" strokeWidth="1.400" />
          <path d="M15.500 13.500h8l4 4.500v13h-12zM22.500 13.500V18H27" stroke="#666" strokeWidth="1.300" fill="#fafafa" />
          <path d="M26.500 21.500h5v10l-2.500-2-2.500 2z" fill="#86bdeb" stroke="#2f8fd0" />
        </Svg>
      </button>
    </div>
  );
}

function StatusBar() {
  return (
    <footer className="flex h-[27px] shrink-0 items-center border-t border-[#c6c6c6] bg-[#f3f2f1] pl-[7px] text-[13px] whitespace-nowrap text-[#555]">
      <span className="flex w-[81px] justify-center">Página 1 de 2</span>
      <span className="ml-5 flex w-[77px] justify-center">179 palabras</span>
      <Btn label="Revisión" className="ml-5 w-[18px] text-[#777]">
        <Svg w={18} h={16}><path d="M9 13.500H.5V1.500H7l2 1.500 2-1.500h6.500v3M9 3v12M17.500 11v2.500H11L9 15l-1.500-1.500" /><path d="M12 6l4 4M16 6l-4 4" strokeWidth="1.800" /></Svg>
      </Btn>
      <span className="ml-[18px] flex w-[137px] justify-center">Inglés (Estados Unidos)</span>
      <div className="flex h-full flex-1 items-center justify-end pr-[21px]">
        <Btn label="Modo de lectura" className="h-full w-[42px]">
          <Svg w={18} h={16}><path d="M9 2v13M.5 1.500H7l2 1 2-1h6.500v12H11l-2 1-2-1H.5zM2.500 4.500h4M2.500 7h4M2.500 9.500h4M11.500 4.500h4M11.500 7h4M11.500 9.500h4" /></Svg>
        </Btn>
        <Btn label="Diseño de impresión" className="h-full w-[42px] bg-[#c8c6c4]">
          <Svg w={17} h={16}><path d="M.5.5h16v15H.5zM3 3.500h11M3 6.500h11M3 9.500h11M3 12.500h11" /></Svg>
        </Btn>
        <Btn label="Diseño web" className="h-full w-[42px]">
          <Svg w={18} h={16}><path d="M8 13.500H.5V1.500h13V6M3 4.500h8M3 7h6M3 9.500h4" /><circle cx="13" cy="11" r="4.200" fill="#777" /><path d="M10 9.500l3 1 1.500-2M11.500 14l1-2 3 1" stroke="#fff" /></Svg>
        </Btn>
        <Btn label="Alejar" className="ml-1 w-[11px]"><Svg w={10} h={3}><path d="M0 1.500h10" strokeWidth="2.500" /></Svg></Btn>
        <input
          type="range"
          aria-label="Zoom"
          defaultValue={50}
          className="mx-1 h-px w-[125px] appearance-none bg-[#b5b5b5] [&::-webkit-slider-thumb]:h-3.5 [&::-webkit-slider-thumb]:w-1.5 [&::-webkit-slider-thumb]:appearance-none [&::-webkit-slider-thumb]:bg-[#777]"
        />
        <Btn label="Acercar" className="w-[11px]"><Svg w={10} h={10} sw={2}><path d="M0 5h10M5 0v10" /></Svg></Btn>
        <span className="ml-3 flex w-[31px] justify-center">100%</span>
      </div>
    </footer>
  );
}

export default function App() {
  return (
    <main className="flex h-screen overflow-hidden bg-black pl-0.5 font-[Open_Sans,Segoe_UI,sans-serif]">
      <div className="flex min-w-0 flex-[1189] flex-col">
        <AcrobatTitle />
        <AcrobatMenu />
        <AcrobatTabs />
        <AcrobatToolbar />
        <AcrobatBody />
      </div>
      <div className="flex w-[22px] shrink-0 items-end pb-[166px] text-[#ddd]">
        <Svg w={22} h={82} sw={3}>
          <path d="M2 1c7-1 10 4 8 9-2 6-5 6-5 14 0 8-2 12-1 18M8 6c-3 8-3 14-3 20M7 20v20M1 50c3 6 0 14 3 20M4 40c-1 12 1 18 0 26" />
          <path d="M1 68c2 6 3 10 7 12 5 1 9 0 14 0M5 70c6 0 10-3 17-3M10 68v11M15 72l5 7M21 70l-5 6M13 73h8" strokeWidth="2.500" />
        </Svg>
      </div>
      <div className="mt-1 flex min-w-0 flex-[1243] flex-col border-l border-[#2b579a]">
        <WordTitle />
        <Ribbon />
        <WordBody />
        <StatusBar />
      </div>
    </main>
  );
}
